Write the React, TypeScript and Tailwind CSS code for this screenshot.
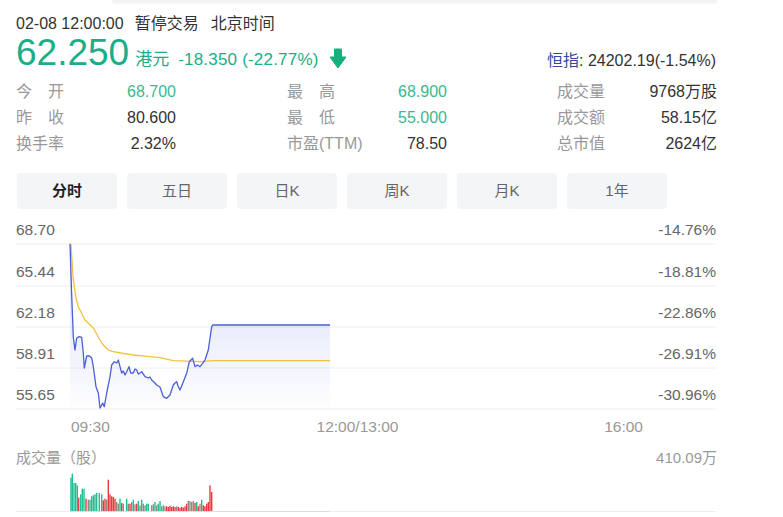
import React from "react";

const GREEN = "#1aae88";

const blueLine: [number, number][] = [
  [70, 244], [71.5, 290], [73.3, 336.7], [75, 350], [76.7, 338], [79.3, 336.7], [81.7, 337.3],
  [83.3, 353], [84.3, 368], [86.7, 356], [89.3, 356], [91.7, 358], [93.3, 366.7], [96, 386.7],
  [98.3, 393], [100, 408], [102.7, 403], [104.3, 406.7], [106.7, 393], [110, 376.7],
  [111.7, 365], [114.3, 361.7], [116.7, 363], [118.3, 360], [120, 366.7], [121.7, 373],
  [123.3, 371], [125, 375], [126.7, 371.7], [129, 366.7], [130.7, 373], [133.3, 373],
  [135, 369], [136.7, 370], [138.3, 374], [140, 373], [141.7, 371.7], [145, 376.7],
  [148.3, 378], [150, 377], [151.7, 380], [155, 383], [156.7, 385], [160, 387],
  [163.3, 396.7], [166.7, 398.3], [170, 395], [173.3, 385], [175, 383], [176.7, 381.7],
  [178, 386], [180, 390], [183.3, 381.7], [186.7, 373.3], [189.3, 361.7], [191, 360],
  [192.7, 358.3], [195, 366.7], [197.5, 365], [200, 366.7], [202.7, 363.3], [205, 360],
  [208.3, 350], [211.7, 326.7], [212.7, 325], [330, 325],
];

const avgLine: [number, number][] = [
  [70, 243.3], [71, 245], [73.3, 280], [76, 298], [78.3, 306.7], [83.3, 316.7], [85, 320],
  [93.3, 328], [100, 340], [103.3, 345], [108.3, 350], [110, 350.7], [113.3, 351.7],
  [126.7, 354], [133.3, 355], [150, 356.7], [160, 357.7], [173.3, 360.7], [200, 361.7],
  [213.3, 360.7], [330, 360.7],
];

// x, height, kind (g = up, r = down, x = flat)
const volumes: [number, number, string][] = [
  [71, 33.3, "g"], [72.3, 37.3, "g"], [74, 28, "g"], [75.7, 28, "g"], [77.3, 25.7, "g"],
  [78.7, 13.3, "r"], [80.7, 16.7, "g"], [82.3, 22.3, "g"], [84, 22.3, "g"], [86, 12.3, "r"],
  [88.3, 11.3, "x"], [90, 11.3, "g"], [91.7, 14.7, "g"], [93.3, 15.7, "g"], [95, 16.7, "g"],
  [96.7, 18, "g"], [99.3, 18, "g"], [101.7, 16.7, "g"], [103.3, 10.7, "r"], [105, 12.3, "r"],
  [106.7, 11.3, "x"], [108.3, 31.3, "r"], [110, 16.7, "r"], [111.7, 14.7, "r"], [113.3, 14, "r"],
  [115, 12.3, "r"], [116.7, 9, "x"], [118.3, 7.3, "x"], [120, 12.3, "g"], [121.7, 8, "r"],
  [123.3, 7.3, "x"], [126.7, 12.3, "g"], [128.3, 7.3, "x"], [130, 7.3, "r"], [131.7, 9, "x"],
  [133.3, 11.3, "g"], [135, 6.7, "x"], [136.7, 7.3, "r"], [138.3, 10, "g"], [140, 5.7, "x"],
  [141.7, 11.3, "g"], [143.3, 7.3, "x"], [145, 5.7, "x"], [146.7, 7.3, "g"], [148.3, 7.3, "g"],
  [151.7, 5.7, "x"], [153.3, 6.7, "x"], [155, 9, "g"], [156.7, 5.7, "x"], [158.3, 7.3, "g"],
  [160, 10, "g"], [161.7, 4.7, "x"], [163.3, 5.7, "g"], [165, 4.7, "x"], [166.7, 4.7, "r"],
  [168.3, 4, "r"], [170, 5.3, "r"], [171.7, 4, "r"], [173.3, 4.7, "r"], [175, 4, "r"],
  [176.7, 4.7, "x"], [178.3, 4, "r"], [180, 3.3, "r"], [181.7, 4, "r"], [183.3, 3.3, "r"],
  [185, 4.7, "r"], [186.7, 7.3, "r"], [188.3, 10, "x"], [190, 10, "x"], [191.7, 9, "x"],
  [193.3, 10, "x"], [195, 8, "r"], [196.7, 9, "g"], [198.3, 4.7, "r"], [200, 7.3, "x"],
  [201.7, 11.3, "g"], [203.3, 5.7, "r"], [205, 4.7, "r"], [206.7, 7.3, "r"], [208.3, 9, "r"],
  [210, 25.7, "r"], [211.7, 19, "r"],
];

const volColor: Record<string, string> = { g: "#1fbf92", r: "#f0363e", x: "#948b7f" };

const toPath = (pts: [number, number][]) =>
  pts.map(([x, y], i) => `${i ? "L" : "M"}${x},${y}`).join(" ");

type Stat = { label: string; value: string; green?: boolean; spread?: boolean };

const stats: Stat[][] = [
  [
    { label: "今开", value: "68.700", green: true, spread: true },
    { label: "最高", value: "68.900", green: true, spread: true },
    { label: "成交量", value: "9768万股" },
  ],
  [
    { label: "昨收", value: "80.600", spread: true },
    { label: "最低", value: "55.000", green: true, spread: true },
    { label: "成交额", value: "58.15亿" },
  ],
  [
    { label: "换手率", value: "2.32%" },
    { label: "市盈(TTM)", value: "78.50" },
    { label: "总市值", value: "2624亿" },
  ],
];

const tabs = ["分时", "五日", "日K", "周K", "月K", "1年"];

const gridY = [244, 286, 327, 368, 409];
const leftLabels = ["68.70", "65.44", "62.18", "58.91", "55.65"];
const rightLabels = ["-14.76%", "-18.81%", "-22.86%", "-26.91%", "-30.96%"];

function StatCell({ stat }: { stat: Stat }) {
  return (
    <div className="flex w-[160px] items-center justify-between">
      {stat.spread ? (
        <span className="flex w-[48px] justify-between text-[#999]">
          <span>{stat.label[0]}</span>
          <span>{stat.label[1]}</span>
        </span>
      ) : (
        <span className="text-[#999]">{stat.label}</span>
      )}
      <span className={stat.green ? "text-[#3cb88e]" : "text-[#333]"}>{stat.value}</span>
    </div>
  );
}

export default function App() {
  return (
    <div className="h-[517px] w-[783px] overflow-hidden bg-white font-['Liberation_Sans','Noto_Sans_CJK_SC',sans-serif]">
      <div className="ml-[112px] h-[3px] w-[605px] rounded-b-md bg-[#f2f2f2] shadow-[0_1px_2px_rgba(0,0,0,0.04)]" />

      <div className="w-[716px] pl-4">
        <div className="mt-[11px] flex h-[20px] items-center text-[16px] leading-[20px] text-[#333]">
          <span>02-08 12:00:00</span>
          <span className="ml-[11px]">暂停交易</span>
          <span className="ml-[12px]">北京时间</span>
        </div>

        <div className="flex h-[37px] items-baseline">
          <span className="text-[37px] leading-[37px]" style={{ color: GREEN }}>
            62.250
          </span>
          <span className="ml-[6px] text-[17px]" style={{ color: GREEN }}>
            港元
          </span>
          <span className="ml-[9px] text-[17px] tracking-[0.2px]" style={{ color: GREEN }}>
            -18.350 (-22.77%)
          </span>
          <svg className="mb-[2px] ml-[10px] self-end" width="18" height="21" viewBox="0 0 18 21">
            <path d="M5.5 1 h7 v8 h4.5 L9 20 L1 9 h4.5 z" fill="#14b07d" strokeLinejoin="round" stroke="#14b07d" strokeWidth="1" />
          </svg>
          <span className="ml-auto self-end text-[16px] leading-[20px] text-[#333]">
            <span className="text-[#34499c]">恒指</span>: 24202.19(-1.54%)
          </span>
        </div>

        <div className="mt-[8px] text-[16px] leading-[26px]">
          {stats.map((row, i) => (
            <div key={i} className="grid h-[26px] grid-cols-[271px_270px_160px]">
              {row.map((s) => (
                <StatCell key={s.label} stat={s} />
              ))}
            </div>
          ))}
        </div>

        <div className="ml-[1px] mt-[16px] flex gap-[10px]">
          {tabs.map((t, i) => (
            <div
              key={t}
              className={
                "flex h-[36px] w-[100px] items-center justify-center rounded-[4px] bg-[#f4f5f7] text-[15px] " +
                (i === 0 ? "font-bold text-[#222]" : "text-[#666]")
              }
            >
              {t}
            </div>
          ))}
        </div>
      </div>

      <svg className="mt-[9px] block" width="783" height="222" viewBox="0 218 783 222">
        <defs>
          <linearGradient id="fill" x1="0" y1="300" x2="0" y2="409" gradientUnits="userSpaceOnUse">
            <stop offset="0" stopColor="#5a6ee0" stopOpacity="0.16" />
            <stop offset="1" stopColor="#5a6ee0" stopOpacity="0.01" />
          </linearGradient>
        </defs>
        {gridY.map((y) => (
          <line key={y} x1="16" x2="716" y1={y} y2={y} stroke="#eeeeee" strokeWidth="1" />
        ))}
        <path d={toPath(blueLine) + " L330,409 L70,409 Z"} fill="url(#fill)" />
        <path d={toPath(avgLine)} fill="none" stroke="#f2c23a" strokeWidth="1.3" />
        <path d={toPath(blueLine)} fill="none" stroke="#4b5fd6" strokeWidth="1.3" strokeLinejoin="round" />
        {leftLabels.map((l, i) => (
          <text key={l} x="16" y={gridY[i] - 9} fontSize="15.5" fill="#666">
            {l}
          </text>
        ))}
        {rightLabels.map((l, i) => (
          <text key={l} x="716" y={gridY[i] - 9} fontSize="15.5" fill="#666" textAnchor="end">
            {l}
          </text>
        ))}
        <text x="71" y="432" fontSize="15.5" fill="#999">09:30</text>
        <text x="357.5" y="432" fontSize="15.5" fill="#999" textAnchor="middle">12:00/13:00</text>
        <text x="643" y="432" fontSize="15.5" fill="#999" textAnchor="end">16:00</text>
      </svg>

      <div className="mt-[8px] flex h-[20px] w-[717px] items-center justify-between pl-4 text-[15px] leading-[20px] text-[#999]">
        <span>成交量（股）</span>
        <span>410.09万</span>
      </div>

      <svg className="block" width="783" height="49" viewBox="0 468 783 49">
        <line x1="16" x2="716" y1="511.5" y2="511.5" stroke="#eeeeee" strokeWidth="1.2" />
        <line x1="70" x2="330" y1="511.5" y2="511.5" stroke="#dddddd" strokeWidth="1.2" />
        {volumes.map(([x, h, k]) => (
          <rect key={x} x={x - 0.7} y={511 - h} width="1.4" height={h} fill={volColor[k]} />
        ))}
      </svg>
    </div>
  );
}
